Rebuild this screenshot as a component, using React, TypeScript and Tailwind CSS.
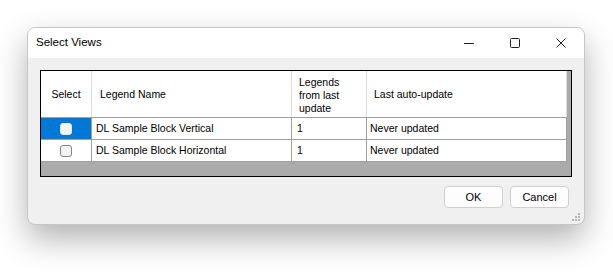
import { useState } from "react";

type Row = { name: string; count: string; last: string };

const rows: Row[] = [
  { name: "DL Sample Block Vertical", count: "1", last: "Never updated" },
  { name: "DL Sample Block Horizontal", count: "1", last: "Never updated" },
];

function CheckBox({ selected }: { selected: boolean }) {
  return (
    <div
      className={
        selected
          ? "w-[12px] h-[12px] rounded-[3px] bg-[#f4f4f4] border border-[#e8e8e8]"
          : "w-[12px] h-[12px] rounded-[3px] bg-[#f3f3f3] border border-[#858585]"
      }
    />
  );
}

export default function App() {
  const [selectedRow] = useState(0);

  return (
    <div
      className="w-[613px] h-[280px] bg-white pl-[27px] pt-[27px] overflow-hidden"
      style={{ fontFamily: '"Liberation Sans", Arial, sans-serif' }}
    >
      <div className="relative w-[558px] h-[198px] flex flex-col rounded-lg border border-[#c6c6c6] bg-[#f0f0f0] shadow-[0_14px_32px_rgba(0,0,0,0.3)] overflow-hidden">
        {/* Title bar */}
        <div className="h-[30px] bg-white flex items-center shrink-0">
          <span className="pl-[8px] text-[11.5px] text-black flex-1">Select Views</span>
          <div className="w-[46px] h-full flex items-center justify-center">
            <svg width="10" height="10" viewBox="0 0 10 10">
              <line x1="0" y1="5.5" x2="10" y2="5.5" stroke="#222" strokeWidth="1" />
            </svg>
          </div>
          <div className="w-[46px] h-full flex items-center justify-center">
            <svg width="10" height="10" viewBox="0 0 10 10">
              <rect x="0.5" y="0.5" width="9" height="9" rx="1" fill="none" stroke="#222" strokeWidth="1" />
            </svg>
          </div>
          <div className="w-[46px] h-full flex items-center justify-center">
            <svg width="10" height="10" viewBox="0 0 10 10">
              <path d="M0.5 0.5 L9.5 9.5 M9.5 0.5 L0.5 9.5" stroke="#222" strokeWidth="1" />
            </svg>
          </div>
        </div>

        {/* Body */}
        <div className="flex-1 px-[12px] pt-[12px] flex flex-col">
          <div className="h-[107px] border border-black bg-[#ababab] text-[10.5px] text-black">
            {/* Header */}
            <div className="flex h-[47px] bg-white w-[526px] border-b border-[#a0a0a0]">
              <div className="w-[51px] border-r border-[#dcdcdc] flex items-center justify-center pt-[1px]">
                Select
              </div>
              <div className="w-[200px] border-r border-[#dcdcdc] flex items-center pl-[8px] pt-[1px]">
                Legend Name
              </div>
              <div className="w-[75px] border-r border-[#dcdcdc] flex items-center pl-[7px] pt-[2px] leading-[13px]">
                Legends
                <br />
                from last
                <br />
                update
              </div>
              <div className="w-[200px] border-r border-[#dcdcdc] flex items-center pl-[7px] pt-[1px]">
                Last auto-update
              </div>
            </div>

            {rows.map((row, i) => (
              <div key={row.name} className="flex h-[22px] bg-white w-[526px] border-b border-[#a0a0a0]">
                <div
                  className={
                    i === selectedRow
                      ? "w-[51px] border-r border-[#a0a0a0] bg-[#0078d7] flex items-center justify-center"
                      : "w-[51px] border-r border-[#a0a0a0] flex items-center justify-center"
                  }
                >
                  <CheckBox selected={i === selectedRow} />
                </div>
                <div className="w-[200px] border-r border-[#a0a0a0] flex items-center pl-[4px]">
                  {row.name}
                </div>
                <div className="w-[75px] border-r border-[#a0a0a0] flex items-center pl-[5px]">
                  {row.count}
                </div>
                <div className="w-[200px] border-r border-[#a0a0a0] flex items-center pl-[3px]">
                  {row.last}
                </div>
              </div>
            ))}
          </div>

          <div className="flex justify-end gap-[7px] mt-[9px] mr-[3px]">
            <button className="w-[59px] h-[22px] rounded-[4px] border border-[#d0d0d0] bg-[#fdfdfd] text-[11px] text-black">
              OK
            </button>
            <button className="w-[59px] h-[22px] rounded-[4px] border border-[#d0d0d0] bg-[#fdfdfd] text-[11px] text-black">
              Cancel
            </button>
          </div>
        </div>

        {/* Resize grip */}
        <svg className="absolute right-[4px] bottom-[3px]" width="8" height="8" viewBox="0 0 8 8">
          <rect x="6" y="0" width="2" height="2" fill="#b5b5b5" />
          <rect x="3" y="3" width="2" height="2" fill="#b5b5b5" />
          <rect x="6" y="3" width="2" height="2" fill="#b5b5b5" />
          <rect x="0" y="6" width="2" height="2" fill="#b5b5b5" />
          <rect x="3" y="6" width="2" height="2" fill="#b5b5b5" />
          <rect x="6" y="6" width="2" height="2" fill="#b5b5b5" />
        </svg>
      </div>
    </div>
  );
}
